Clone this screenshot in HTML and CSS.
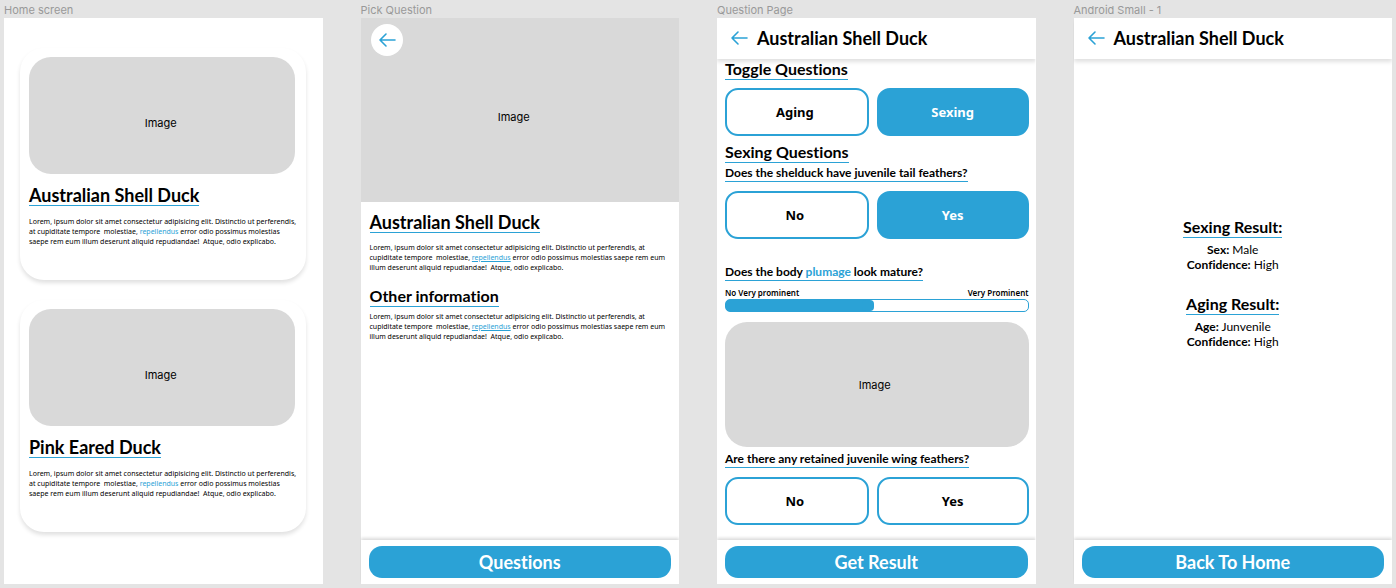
FILE: index.html
```html
<!DOCTYPE html>
<html lang="en">
<head>
<meta charset="utf-8">
<meta name="viewport" content="width=device-width, initial-scale=1">
<title>Duck identification screens</title>
<link rel="stylesheet" href="styles.css">
</head>
<body>
<main class="board">
  <section class="artboard">
    <p class="artboard-name">Home screen</p>
    <div class="screen home">
      <article class="card">
        <div class="picture card-picture">Image</div>
        <h2 class="title underlined">Australian Shell Duck</h2>
        <p class="copy">Lorem, ipsum dolor sit amet consectetur adipisicing elit. Distinctio ut perferendis, at cupiditate tempore&nbsp; molestiae, <a class="term" href="#repellendus">repellendus</a> error odio possimus molestias saepe rem eum illum deserunt aliquid repudiandae!&nbsp; Atque, odio explicabo.</p>
      </article>
      <article class="card">
        <div class="picture card-picture">Image</div>
        <h2 class="title underlined">Pink Eared Duck</h2>
        <p class="copy">Lorem, ipsum dolor sit amet consectetur adipisicing elit. Distinctio ut perferendis, at cupiditate tempore&nbsp; molestiae, <a class="term" href="#repellendus">repellendus</a> error odio possimus molestias saepe rem eum illum deserunt aliquid repudiandae!&nbsp; Atque, odio explicabo.</p>
      </article>
    </div>
  </section>

  <section class="artboard">
    <p class="artboard-name">Pick Question</p>
    <div class="screen">
      <div class="picture hero">
        <button class="back back-round" aria-label="Back">
          <svg class="arrow" viewBox="0 0 18 16" aria-hidden="true"><path d="M17 8H2M8 2L2 8l6 6"/></svg>
        </button>
        Image
      </div>
      <div class="details">
        <h2 class="title underlined">Australian Shell Duck</h2>
        <p class="copy">Lorem, ipsum dolor sit amet consectetur adipisicing elit. Distinctio ut perferendis, at cupiditate tempore&nbsp; molestiae, <a class="term term-line" href="#repellendus">repellendus</a> error odio possimus molestias saepe rem eum illum deserunt aliquid repudiandae!&nbsp; Atque, odio explicabo.</p>
        <h3 class="subtitle underlined">Other information</h3>
        <p class="copy">Lorem, ipsum dolor sit amet consectetur adipisicing elit. Distinctio ut perferendis, at cupiditate tempore&nbsp; molestiae, <a class="term term-line" href="#repellendus">repellendus</a> error odio possimus molestias saepe rem eum illum deserunt aliquid repudiandae!&nbsp; Atque, odio explicabo.</p>
      </div>
      <footer class="footer"><button class="action">Questions</button></footer>
    </div>
  </section>

  <section class="artboard">
    <p class="artboard-name">Question Page</p>
    <div class="screen">
      <header class="topbar">
        <button class="back" aria-label="Back">
          <svg class="arrow" viewBox="0 0 18 16" aria-hidden="true"><path d="M17 8H2M8 2L2 8l6 6"/></svg>
        </button>
        <h2 class="title">Australian Shell Duck</h2>
      </header>
      <div class="questions">
        <h3 class="subtitle underlined">Toggle Questions</h3>
        <div class="choices">
          <button class="choice" aria-pressed="false">Aging</button>
          <button class="choice" aria-pressed="true">Sexing</button>
        </div>
        <h3 class="subtitle underlined">Sexing Questions</h3>
        <h4 class="question question-first underlined">Does the shelduck have juvenile tail feathers?</h4>
        <div class="choices">
          <button class="choice" aria-pressed="false">No</button>
          <button class="choice" aria-pressed="true">Yes</button>
        </div>
        <label class="question question-scale underlined" for="maturity">Does the body <a class="term" href="#plumage">plumage</a> look mature?</label>
        <div class="scale-ends"><span>No Very prominent</span><span>Very Prominent</span></div>
        <input class="scale" id="maturity" type="range" min="0" max="100" value="47">
        <div class="picture question-picture">Image</div>
        <h4 class="question underlined">Are there any retained juvenile wing feathers?</h4>
        <div class="choices">
          <button class="choice" aria-pressed="false">No</button>
          <button class="choice" aria-pressed="false">Yes</button>
        </div>
      </div>
      <footer class="footer"><button class="action">Get Result</button></footer>
    </div>
  </section>

  <section class="artboard">
    <p class="artboard-name">Android Small - 1</p>
    <div class="screen">
      <header class="topbar">
        <button class="back" aria-label="Back">
          <svg class="arrow" viewBox="0 0 18 16" aria-hidden="true"><path d="M17 8H2M8 2L2 8l6 6"/></svg>
        </button>
        <h2 class="title">Australian Shell Duck</h2>
      </header>
      <div class="results">
        <section class="result">
          <h3 class="subtitle underlined">Sexing Result:</h3>
          <p class="fact"><b>Sex:</b> Male</p>
          <p class="fact"><b>Confidence:</b> High</p>
        </section>
        <section class="result">
          <h3 class="subtitle underlined">Aging Result:</h3>
          <p class="fact"><b>Age:</b> Junvenile</p>
          <p class="fact"><b>Confidence:</b> High</p>
        </section>
      </div>
      <footer class="footer"><button class="action">Back To Home</button></footer>
    </div>
  </section>
</main>
</body>
</html>
```
FILE: styles.css
```css
:root {
  --blue: #2ba2d6;
  --grey: #d9d9d9;
  --display: Lato, "Noto Sans", sans-serif;
  --text: "Noto Sans", "Open Sans", sans-serif;
}

* { box-sizing: border-box; }

body {
  margin: 0;
  background: #e4e4e4;
  color: #000;
  font-family: var(--display);
  font-variant-ligatures: none;
}

h2, h3, h4, p { margin: 0; }

button {
  margin: 0;
  border: 0;
  cursor: pointer;
}

.board {
  display: grid;
  grid-template-columns: repeat(4, minmax(0, 1fr));
  gap: 38px;
  min-height: 100vh;
  padding: 2px 4px 4px;
}

.artboard {
  display: flex;
  flex-direction: column;
}

.artboard-name {
  color: #999;
  font: 11px/16px Inter, sans-serif;
}

.screen {
  flex: 1;
  display: flex;
  flex-direction: column;
  background: #fff;
}

.title {
  font-size: 18px;
  line-height: 20px;
  font-weight: 700;
}

.subtitle {
  font-size: 16px;
  line-height: 20px;
  font-weight: 700;
}

.question {
  font-size: 12px;
  line-height: 16px;
  font-weight: 700;
}

.underlined {
  align-self: flex-start;
  border-bottom: 1px solid var(--blue);
}

.copy {
  font: 7px/10px var(--text);
}

.term {
  color: var(--blue);
  text-decoration: none;
}

.term-line { text-decoration: underline; }

.picture {
  display: flex;
  align-items: center;
  justify-content: center;
  background: var(--grey);
  font: 11px/16px Inter, sans-serif;
}

/* Home */
.home {
  gap: 20px;
  padding: 30px 17px 48px 16px;
}

.card {
  display: flex;
  flex-direction: column;
  padding: 9px 6px 33px 9px;
  border-radius: 24px;
  box-shadow: 0 3px 4px rgba(0, 0, 0, 0.12);
}

.card-picture {
  height: 117px;
  margin-right: 5px;
  padding: 14px 2px 0 0;
  border-radius: 22px;
}

.card .title { margin-top: 11px; }
.card .copy { margin-top: 11px; }

/* Pick question */
.hero {
  position: relative;
  height: 184px;
  padding: 14px 12px 0 0;
}

.details {
  flex: 1;
  display: flex;
  flex-direction: column;
  padding: 10px 8px 10px 9px;
}

.details .copy { margin-top: 10px; }
.details .subtitle { margin-top: 13px; }
.details .subtitle + .copy { margin-top: 5px; }

.back {
  display: flex;
  padding: 0;
  background: none;
}

.back-round {
  position: absolute;
  top: 6px;
  left: 10px;
  align-items: center;
  justify-content: center;
  width: 32px;
  height: 32px;
  border-radius: 50%;
  background: #fff;
}

.arrow {
  width: 18px;
  height: 16px;
  fill: none;
  stroke: var(--blue);
  stroke-width: 1.6;
  stroke-linecap: round;
  stroke-linejoin: round;
}

/* Bars */
.topbar {
  display: flex;
  align-items: center;
  gap: 9px;
  height: 41px;
  padding: 0 13px 2px;
  box-shadow: 0 3px 4px rgba(0, 0, 0, 0.12);
  clip-path: inset(0 0 -8px);
}

.footer {
  padding: 6px 8px;
  box-shadow: 0 -2px 3px rgba(0, 0, 0, 0.14);
  clip-path: inset(-6px 0 0);
}

.action {
  display: block;
  width: 100%;
  height: 32px;
  padding: 0;
  border-radius: 13px;
  background: var(--blue);
  color: #fff;
  font: 700 18px/20px var(--display);
  font-variant-ligatures: none;
}

/* Question page */
.questions {
  flex: 1;
  display: flex;
  flex-direction: column;
  padding: 0 7px 8px 8px;
}

.choices {
  display: grid;
  grid-template-columns: 144fr 152fr;
  gap: 8px;
  margin: 8px 0 6px;
}

.question + .choices { margin: 9px 0 0; }

.choice {
  height: 48px;
  padding: 0 4px 0 0;
  border: 2px solid var(--blue);
  border-radius: 13px;
  background: #fff;
  color: #000;
  font: 700 13px/16px var(--text);
}

.choice + .choice { padding: 0; }

.choice[aria-pressed="true"] {
  background: var(--blue);
  color: #fff;
}

.question-first { margin-top: 2px; }
.question-scale { margin-top: 25px; }

.scale-ends {
  display: flex;
  justify-content: space-between;
  margin-top: 7px;
  font: 600 8px/10px var(--text);
}

.scale {
  appearance: none;
  width: 100%;
  height: 13px;
  margin: 1px 0 10px;
  overflow: hidden;
  border: 1px solid var(--blue);
  border-radius: 5px;
  background: linear-gradient(90deg, var(--blue) 47%, #fff 47%);
}

.scale::-webkit-slider-thumb {
  appearance: none;
  width: 12px;
  height: 11px;
  border-radius: 4px;
  background: var(--blue);
}

.question-picture {
  height: 125px;
  margin-bottom: 4px;
  padding-right: 4px;
  border-radius: 22px;
}

/* Results */
.results {
  flex: 1;
  display: flex;
  flex-direction: column;
  justify-content: center;
  gap: 22px;
  padding-bottom: 34px;
}

.result {
  display: flex;
  flex-direction: column;
  align-items: center;
}

.result .subtitle {
  align-self: center;
  margin-bottom: 4px;
}

.fact {
  font-size: 12px;
  line-height: 15px;
}
```
